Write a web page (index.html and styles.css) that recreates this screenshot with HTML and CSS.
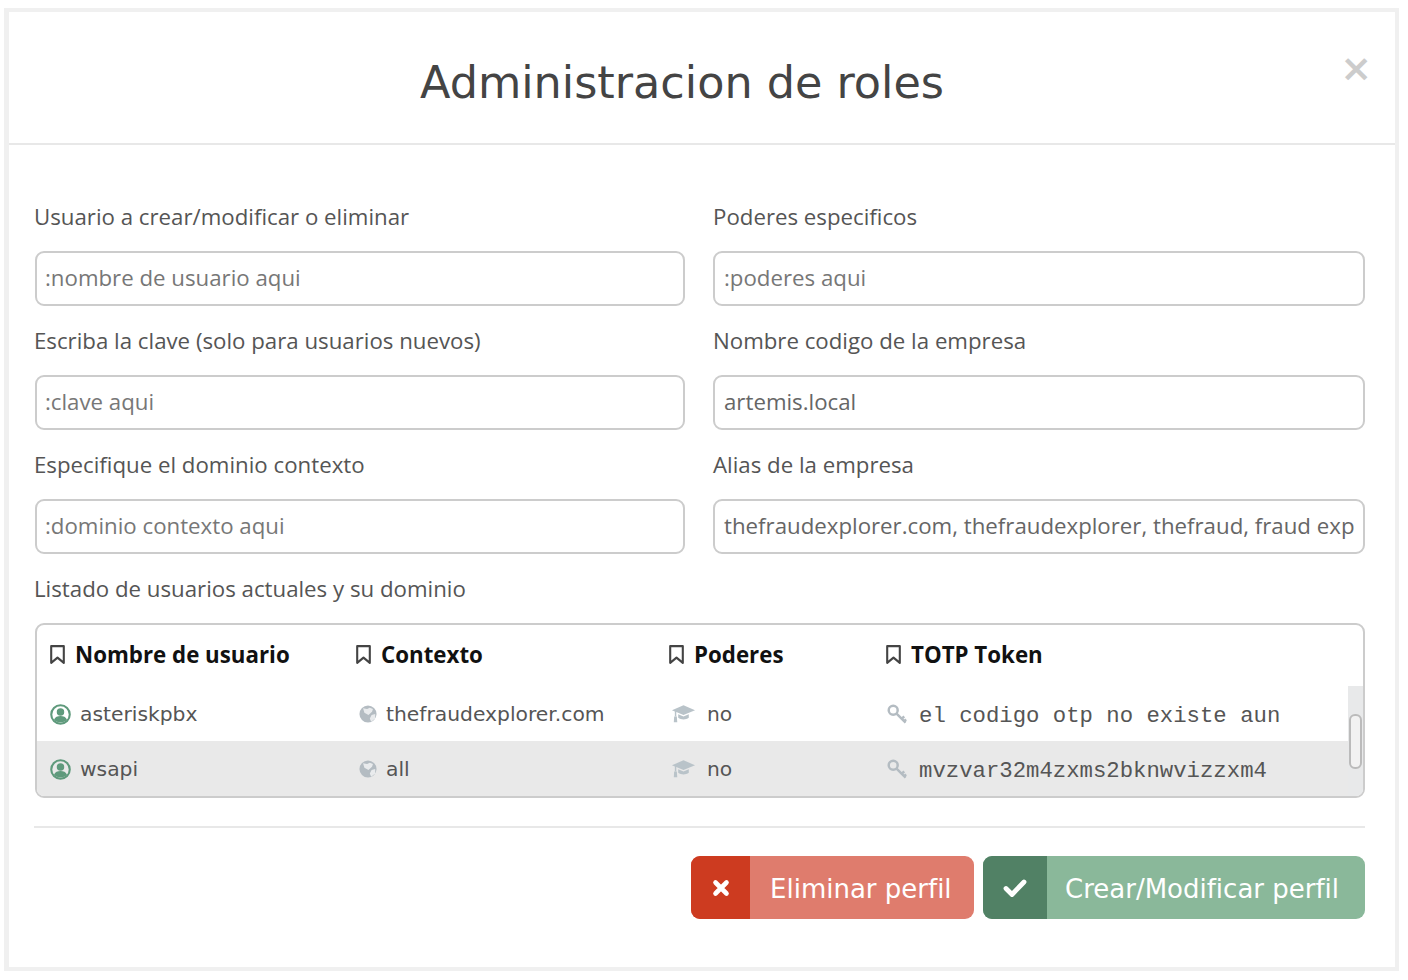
FILE: index.html
```html
<!DOCTYPE HTML>
<html lang="es">
  <head>
    <meta charset="UTF-8">
    <title>Administracion de roles</title>
    <link rel="stylesheet" href="styles.css">
  </head>
  <body>
    <svg class="sprites" width="0" height="0">
      <symbol id="i-bookmark" viewBox="0 0 16 20">
        <path d="M2 2h12v16l-6-5-6 5z" fill="none" stroke="currentColor" stroke-width="2" stroke-linejoin="round"/>
      </symbol>
      <symbol id="i-user" viewBox="0 0 22 22">
        <circle cx="11" cy="11" r="9.700" fill="none" stroke="currentColor" stroke-width="2.200"/>
        <circle cx="11" cy="8.400" r="3.900" fill="currentColor"/>
        <path d="M4.200 16.600c1-3 3.800-4 6.800-4s5.800 1 6.800 4c-3.500 3.600-10.100 3.600-13.600 0z" fill="currentColor"/>
      </symbol>
      <symbol id="i-globe" viewBox="0 0 20 20">
        <circle cx="10" cy="10" r="9.500" fill="currentColor"/>
        <path d="M4.500 3.500l4.500 1 3-1.500 3.500 1.500-1 3-4 3.500L6 8.500zM18 10l-4 1-2 4 1.500 3.500L18 15z" fill="#fff" opacity=".7"/>
      </symbol>
      <symbol id="i-cap" viewBox="0 0 26 20">
        <path d="M13 1L25 6 13 11 5.500 8v4.500H4V7.300L1 6z" fill="currentColor"/>
        <path d="M7.500 10.200L13 12.500l5.500-2.300V14c-3 2.400-8 2.400-11 0z" fill="currentColor"/>
        <path d="M3.300 12.500h2.800l.4 6H2.900z" fill="currentColor"/>
      </symbol>
      <symbol id="i-key" viewBox="0 0 22 22">
        <circle cx="6.500" cy="6.500" r="4.700" fill="none" stroke="currentColor" stroke-width="2.600"/>
        <path d="M10 10l9.500 9.500M15.500 15.500l2.500-2.500M18 18l2-2" fill="none" stroke="currentColor" stroke-width="2.600"/>
      </symbol>
    </svg>

    <div class="modal">
      <div class="modal-header">
        <h1>Administracion de roles</h1>
        <span class="cerrar">&times;</span>
      </div>

      <div class="modal-body">
        <div class="campos">
          <div class="campo">
            <label>Usuario a crear/modificar o eliminar</label>
            <input type="text" placeholder=":nombre de usuario aqui">
          </div>
          <div class="campo">
            <label>Poderes especificos</label>
            <input type="text" placeholder=":poderes aqui">
          </div>
          <div class="campo">
            <label>Escriba la clave (solo para usuarios nuevos)</label>
            <input type="text" placeholder=":clave aqui">
          </div>
          <div class="campo">
            <label>Nombre codigo de la empresa</label>
            <input type="text" value="artemis.local">
          </div>
          <div class="campo">
            <label>Especifique el dominio contexto</label>
            <input type="text" placeholder=":dominio contexto aqui">
          </div>
          <div class="campo">
            <label>Alias de la empresa</label>
            <input type="text" value="thefraudexplorer.com, thefraudexplorer, thefraud, fraud explorer">
          </div>
        </div>

        <label class="etiqueta-lista">Listado de usuarios actuales y su dominio</label>

        <div class="tabla">
          <div class="fila cabecera">
            <div class="celda"><svg class="ico-marca"><use href="#i-bookmark"/></svg>Nombre de usuario</div>
            <div class="celda"><svg class="ico-marca"><use href="#i-bookmark"/></svg>Contexto</div>
            <div class="celda"><svg class="ico-marca"><use href="#i-bookmark"/></svg>Poderes</div>
            <div class="celda"><svg class="ico-marca"><use href="#i-bookmark"/></svg>TOTP Token</div>
          </div>
          <div class="cuerpo">
            <div class="filas">
              <div class="fila">
                <div class="celda"><svg class="ico-usuario"><use href="#i-user"/></svg>asteriskpbx</div>
                <div class="celda"><svg class="ico-globo"><use href="#i-globe"/></svg>thefraudexplorer.com</div>
                <div class="celda"><svg class="ico-gorro"><use href="#i-cap"/></svg>no</div>
                <div class="celda"><svg class="ico-llave"><use href="#i-key"/></svg><span class="token">el codigo otp no existe aun</span></div>
              </div>
              <div class="fila gris">
                <div class="celda"><svg class="ico-usuario"><use href="#i-user"/></svg>wsapi</div>
                <div class="celda"><svg class="ico-globo"><use href="#i-globe"/></svg>all</div>
                <div class="celda"><svg class="ico-gorro"><use href="#i-cap"/></svg>no</div>
                <div class="celda"><svg class="ico-llave"><use href="#i-key"/></svg><span class="token">mvzvar32m4zxms2bknwvizzxm4</span></div>
              </div>
            </div>
            <div class="scroll"><div class="scroll-thumb"></div></div>
          </div>
        </div>

        <hr>

        <div class="botones">
          <a class="boton boton-rojo">
            <span class="boton-ico">
              <svg width="18" height="18" viewBox="0 0 18 18"><path d="M3.500 3.500l11 11M14.500 3.500l-11 11" stroke="#fff" stroke-width="4.600" stroke-linecap="round"/></svg>
            </span>
            <span class="boton-txt">Eliminar perfil</span>
          </a>
          <a class="boton boton-verde">
            <span class="boton-ico">
              <svg width="24" height="20" viewBox="0 0 24 20"><path d="M3 10.500l6 6L21 4" fill="none" stroke="#fff" stroke-width="4.800" stroke-linejoin="round" stroke-linecap="round"/></svg>
            </span>
            <span class="boton-txt">Crear/Modificar perfil</span>
          </a>
        </div>
      </div>
    </div>
  </body>
</html>
```

FILE: styles.css
```css
html, body {
    padding: 0;
    margin: 0;
    background: #fff;
}

.sprites {
    display: block;
}

.modal {
    width: 1395px;
    height: 963px;
    box-sizing: border-box;
    margin: 8px 0 0 4px;
    border: 4px solid #f0f0f0;
    border-left-width: 5px;
    font-family: "Open Sans", sans-serif;
    color: #555;
}

.modal-header {
    position: relative;
    height: 133px;
    border-bottom: 2px solid #e8e8e8;
    display: flex;
    justify-content: center;
    padding-top: 42px;
    box-sizing: border-box;
}

h1 {
    margin: 0 0 0 -40px;
    font-family: "DejaVu Sans", sans-serif;
    font-weight: normal;
    font-size: 44.500px;
    line-height: 58px;
    color: #444;
}

.cerrar {
    position: absolute;
    top: 32px;
    right: 23px;
    font-family: "DejaVu Sans", sans-serif;
    font-weight: bold;
    font-size: 38px;
    line-height: 48px;
    color: #ccc;
}

.modal-body {
    padding: 57px 30px 0 25px;
}

.campos {
    display: grid;
    grid-template-columns: 651px 652px;
    column-gap: 28px;
    row-gap: 20px;
}

label {
    display: block;
    font-size: 22.250px;
    line-height: 30px;
    height: 30px;
    color: #555;
}

.campo input {
    display: block;
    width: 100%;
    height: 55px;
    box-sizing: border-box;
    margin-top: 19px;
    padding: 0 9px 2px;
    border: 2px solid #ccc;
    border-radius: 9px;
    font-family: "Open Sans", sans-serif;
    font-size: 22.250px;
    color: #666;
    background: #fff;
    outline: none;
}

.campo:nth-child(odd) input {
    width: 650px;
    margin-left: 1px;
    padding-left: 8px;
}

.campo input::placeholder {
    color: #777;
    opacity: 1;
}

.etiqueta-lista {
    margin-top: 20px;
}

.tabla {
    margin: 19px 0 0 1px;
    width: 1330px;
    height: 175px;
    box-sizing: border-box;
    border: 2px solid #ccc;
    border-radius: 9px;
    overflow: hidden;
    font-family: "DejaVu Sans", sans-serif;
}

.fila {
    display: grid;
    grid-template-columns: 306px 313px 217px 1fr;
    align-items: center;
    height: 55px;
    font-size: 20.300px;
    color: #555;
}

.cabecera {
    height: 61px;
    font-family: "Open Sans", sans-serif;
    font-size: 22.300px;
    font-weight: bold;
    color: #111;
}

.celda {
    display: flex;
    align-items: center;
    padding-left: 12px;
    white-space: nowrap;
}

.cabecera .celda {
    padding-bottom: 2px;
}

.filas .celda {
    padding-top: 1px;
}

.cuerpo {
    display: flex;
}

.filas {
    flex: 1;
}

.gris {
    background: #e9e9e9;
}

.ico-marca {
    width: 17px;
    height: 21px;
    margin-right: 9px;
    color: #444;
}

.ico-usuario {
    width: 21px;
    height: 21px;
    margin-left: 1px;
    margin-right: 9px;
    color: #5f9a7c;
}

.ico-globo {
    width: 18px;
    height: 18px;
    margin-left: 4px;
    margin-right: 9px;
    color: #b4bcc2;
}

.ico-gorro {
    width: 25px;
    height: 20px;
    margin-left: 3px;
    margin-right: 11px;
    color: #b9c3c9;
}

.ico-llave {
    width: 21px;
    height: 21px;
    margin-left: 2px;
    margin-right: 11px;
    color: #b4bcc2;
}

.token {
    padding-top: 3px;
    font-family: "Liberation Mono", monospace;
    font-size: 22.300px;
    color: #555;
}

.scroll {
    width: 15px;
    background: #e8e9ea;
    display: flex;
    align-items: center;
}

.scroll-thumb {
    width: 13px;
    height: 55px;
    margin-left: 1px;
    box-sizing: border-box;
    border: 2px solid #bbb;
    border-radius: 6px;
    background: #f2f2f2;
}

hr {
    border: none;
    border-top: 2px solid #e8e8e8;
    margin: 28px 0 0 0;
}

.botones {
    display: flex;
    justify-content: flex-end;
    gap: 9px;
    margin-top: 28px;
}

.boton {
    display: flex;
    height: 63px;
    border-radius: 9px;
    overflow: hidden;
    color: #fff;
    font-family: "DejaVu Sans", sans-serif;
    font-size: 26px;
    line-height: 66px;
}

.boton-ico {
    display: flex;
    align-items: center;
    justify-content: center;
}

.boton-txt {
    display: block;
    white-space: nowrap;
}

.boton-rojo {
    width: 283px;
    background: #df7c6d;
}

.boton-rojo .boton-ico {
    width: 59px;
    background: #cd3b20;
}

.boton-rojo .boton-txt {
    padding-left: 20px;
}

.boton-verde {
    width: 382px;
    background: #8ab89a;
}

.boton-verde .boton-ico {
    width: 64px;
    background: #518165;
}

.boton-verde .boton-txt {
    padding-left: 18px;
}
```
